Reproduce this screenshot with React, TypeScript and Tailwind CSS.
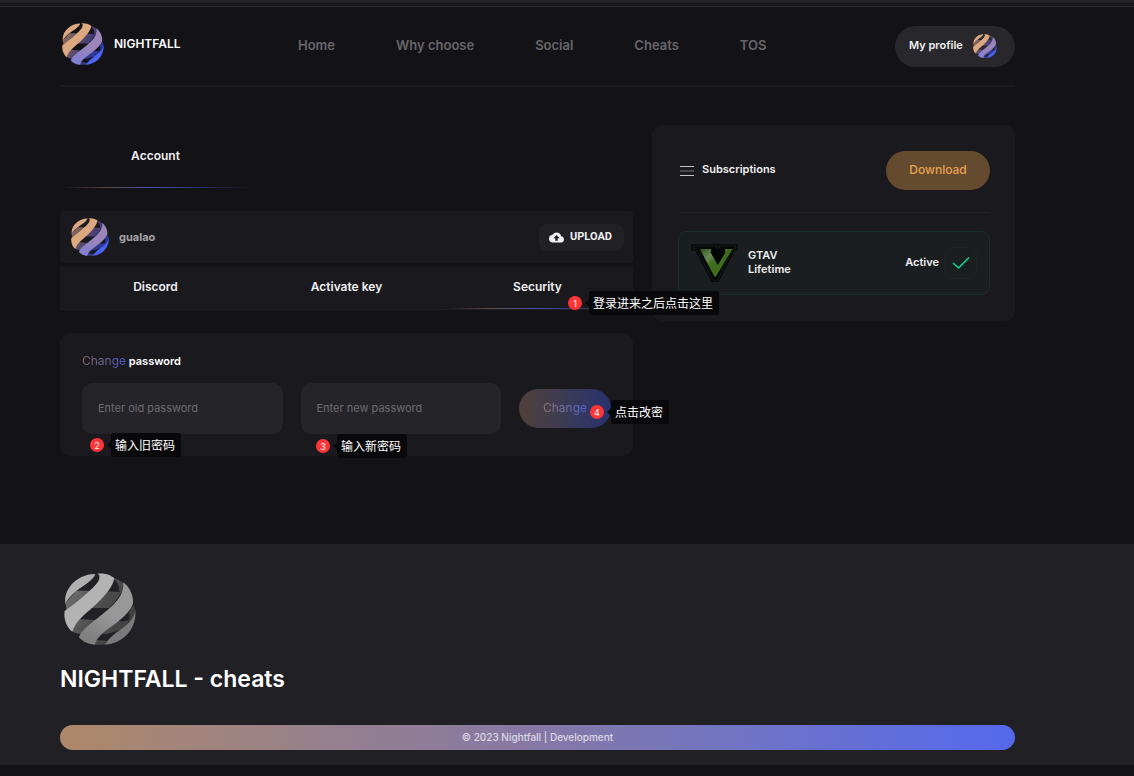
import { useId, type ReactNode } from 'react';
import { MdCloudUpload } from 'react-icons/md';

type Palette = { front: [string, string, string]; top: string; low: string; back: [string, string, string] };

const COLOR: Palette = {
  front: ['#dba87f', '#9b85bb', '#8580cf'],
  top: '#dba87f',
  low: '#4d63f2',
  back: ['#8a6a58', '#4e4270', '#1f35a8'],
};

const GRAY: Palette = {
  front: ['#b3b3b3', '#989898', '#808080'],
  top: '#b0b0b0',
  low: '#7a7a7a',
  back: ['#6e6e6e', '#4b4b4b', '#404040'],
};

function Globe({ palette, className }: { palette: Palette; className: string }) {
  const id = useId();
  const front = `${id}f`;
  const back = `${id}b`;
  return (
    <svg viewBox="12 14 216 216" className={className} aria-hidden="true">
      <defs>
        <linearGradient id={front} gradientUnits="userSpaceOnUse" x1="190" y1="60" x2="110" y2="215">
          <stop offset="0.5" stopColor={palette.front[1]} />
          <stop offset="1" stopColor={palette.front[2]} />
        </linearGradient>
        <linearGradient id={back} gradientUnits="userSpaceOnUse" x1="25" y1="80" x2="210" y2="180">
          <stop offset="0" stopColor={palette.back[0]} />
          <stop offset="0.5" stopColor={palette.back[1]} />
          <stop offset="1" stopColor={palette.back[2]} />
        </linearGradient>
      </defs>
      <g fill={`url(#${back})`}>
        <path d="M16 104L50 67H98L184 71C174 90 162 106 147 119H70L20 126Z" />
        <path d="M160 28C174 33 184 38 192 46L191 74L178 69C178 52 172 40 160 30Z" />
        <path d="M36 188C42 172 51 160 60 152L110 156L190 159L208 156L196 180L140 198L62 196C52 197 44 195 36 188Z" />
        <path d="M207 130L221 110C226 120 227 135 225 145L206 166C209 154 209 142 207 130Z" />
        <path d="M104 229L110 215L146 218L137 229Z" />
      </g>
      <path fill={palette.top} d="M16 106C10 58 56 16 106 17C99 37 74 49 50 67C34 80 22 92 16 106Z" />
      <path
        fill={palette.front[0]}
        d="M111 16C132 13 153 19 163 30C158 56 137 80 113 103C84 131 46 156 37 190C20 178 10 151 14 128C36 112 62 92 86 70C104 53 121 38 118 22C117 19 115 17 111 16Z"
      />
      <path
        fill={`url(#${front})`}
        d="M190 42C208 56 221 80 219 107C204 142 168 164 136 188C117 203 108 216 105 229C86 228 68 220 57 207C62 187 88 169 117 146C152 118 194 88 190 42Z"
      />
      <path fill={palette.low} d="M226 126C231 181 189 226 136 229C144 211 163 196 185 181C206 166 223 150 226 126Z" />
    </svg>
  );
}

function GameLogo() {
  return (
    <svg viewBox="152 386 142 116" className="h-[38px] w-[47px] shrink-0" aria-hidden="true">
      <defs>
        <linearGradient id="vfill" x1="0" y1="0" x2="1" y2="1">
          <stop offset="0" stopColor="#2d4d1d" />
          <stop offset="0.28" stopColor="#6b8a58" />
          <stop offset="0.45" stopColor="#3d6d1c" />
          <stop offset="1" stopColor="#3c6a1a" />
        </linearGradient>
      </defs>
      <path d="M153 387H293V406H284L236 501H214L164 406H153Z" fill="#050706" />
      <path d="M158 392H288V401H280L233 496H217L168 401H158Z" fill="none" stroke="#23292b" strokeWidth="2" />
      <path d="M178 401H218L216 412L233 448L250 412L246 401H278L227 486H223Z" fill="url(#vfill)" />
      <path d="M214 399H254L256 412L233 450L211 412Z" fill="#030403" />
      <path d="M229 393V401M237 393V401" stroke="#30363a" strokeWidth="2" />
    </svg>
  );
}

function Note({ step, className, children }: { step: number; className: string; children: ReactNode }) {
  return (
    <div className={`absolute z-10 flex items-center gap-[7px] whitespace-nowrap ${className}`}>
      <span className="flex size-3.5 items-center justify-center rounded-full bg-[#ff3436] text-[9px] leading-none text-white">
        {step}
      </span>
      <span className="relative h-6 rounded-[2px] bg-[#09090b] pr-1.5 pl-1 font-['Noto_Sans_CJK_SC',sans-serif] text-[12px] leading-6 text-white">
        <span className="absolute top-2 -left-1 border-y-4 border-r-4 border-y-transparent border-r-[#09090b]" />
        {children}
      </span>
    </div>
  );
}

const NAV = ['Home', 'Why choose', 'Social', 'Cheats', 'TOS'];

function Underline() {
  return (
    <span className="absolute inset-x-0 bottom-0 h-px bg-linear-to-r from-transparent via-[#4a4cae] to-transparent">
      <span className="block h-px w-1/2 bg-linear-to-r from-[#131217] via-[#5d4b48] to-[#4a4cae]" />
    </span>
  );
}

export default function App() {
  return (
    <div className="min-h-screen bg-[#131217] font-[Inter,sans-serif] text-[11px] text-[#f0f0f1]">
      <div className="h-[7px] border-b border-[#2c2c2d] bg-linear-to-b from-[#212327] from-50% to-[#171718] to-50%" />

      <header className="mr-[119px] ml-15 flex h-20 items-center border-b-2 border-[#1b1a20]">
        <a href="#home" className="flex w-[238px] items-center gap-2.5 pb-1 pl-0.5 text-[12px] font-semibold text-white">
          <Globe palette={COLOR} className="size-[42px]" />
          NIGHTFALL
        </a>
        <nav className="flex gap-[61px] text-[13px] font-semibold text-[#67666a]">
          {NAV.map((n) => (
            <a key={n} href={`#${n}`}>
              {n}
            </a>
          ))}
        </nav>
        <a
          href="#profile"
          className="ml-auto flex h-[41px] w-[120px] items-center justify-between rounded-full bg-[#28272b] pr-[18px] pl-3.5 font-semibold"
        >
          <span className="pb-0.5">My profile</span>
          <Globe palette={COLOR} className="size-6" />
        </a>
      </header>

      <main className="mr-[119px] ml-15 grid grid-cols-[minmax(0,573fr)_minmax(0,363fr)] items-start gap-[19px] pt-[38px] pb-[88px]">
        <div>
          <button className="relative h-[63px] w-1/3 pb-0.5 text-[12px] font-semibold">
            Account
            <Underline />
          </button>

          <section className="mt-[23px] flex h-[52px] items-center rounded bg-[#1a191e] pr-[9px] pl-[11px]">
            <Globe palette={COLOR} className="size-[38px]" />
            <span className="ml-2.5 font-bold text-[#a5a4a8]">gualao</span>
            <button className="ml-auto flex h-[27px] items-center gap-1.5 rounded-lg bg-[#212025] pr-3 pl-2.5 font-[Roboto,sans-serif] font-bold">
              <MdCloudUpload className="size-[15px]" />
              UPLOAD
            </button>
          </section>

          <div className="relative mt-[3px] grid h-11 grid-cols-3 border-b border-[#1f1e23] bg-[#1a191e] text-[12px]">
            <button className="pb-0.5 font-semibold">Discord</button>
            <button className="pb-0.5 font-semibold">Activate key</button>
            <button className="relative pb-0.5 font-semibold">
              Security
              <Underline />
            </button>
            <Note step={1} className="top-[25px] left-[508px]">
              登录进来之后点击这里
            </Note>
          </div>

          <section className="relative mt-[23px] rounded-[10px] bg-[#1a191e] px-[22px] pt-5 pb-[22px]">
            <h2 className="text-[11px] leading-4 font-semibold text-white">
              <span className="bg-linear-to-r from-[#82685a] to-[#5059c8] bg-clip-text text-[12px] font-normal text-transparent">
                Change
              </span>{' '}
              password
            </h2>
            <form className="mt-3.5 flex items-center gap-[18px]" onSubmit={(e) => e.preventDefault()}>
              <input
                type="password"
                aria-label="Enter old password"
                placeholder="Enter old password"
                className="h-[51px] min-w-0 flex-1 rounded-[10px] bg-[#252428] px-4 pb-0.5 outline-none placeholder:text-[#6d6c70]"
              />
              <input
                type="password"
                aria-label="Enter new password"
                placeholder="Enter new password"
                className="h-[51px] min-w-0 flex-1 rounded-[10px] bg-[#252428] px-4 pb-0.5 outline-none placeholder:text-[#6d6c70]"
              />
              <button className="h-[39px] w-[92px] rounded-full bg-linear-to-r from-[#503f38] to-[#28316f] pb-0.5 text-[12px]">
                <span className="bg-linear-to-r from-[#8f7468] to-[#5662d8] bg-clip-text text-transparent">Change</span>
              </button>
            </form>
            <Note step={2} className="top-[100px] left-[30px]">
              输入旧密码
            </Note>
            <Note step={3} className="top-[101px] left-[256px]">
              输入新密码
            </Note>
            <Note step={4} className="top-[67px] left-[530px]">
              点击改密
            </Note>
          </section>
        </div>

        <aside className="rounded-[10px] bg-[#1a191e] py-[26px] pr-[25px] pl-[26px]">
          <div className="flex items-center border-b border-[#212025] pb-[22px]">
            <svg viewBox="0 0 14 12" className="ml-0.5 h-3 w-3.5" stroke="#c4c4c6" aria-hidden="true">
              <path d="M0 1.5H14M0 10.5H14" />
              <path d="M0 6H14" stroke="#77767a" />
            </svg>
            <h2 className="ml-2 pb-0.5 text-[11px] font-semibold">Subscriptions</h2>
            <button className="ml-auto h-[39px] w-[104px] rounded-full bg-[#644a2f] pb-0.5 text-[12px] font-medium text-[#eba34f]">
              Download
            </button>
          </div>
          <div className="mt-[18px] flex h-16 items-center rounded-lg border border-[#18302b] bg-[#1a1e20] px-3">
            <GameLogo />
            <p className="ml-2.5 pb-0.5 leading-[14px] font-semibold">
              GTAV
              <br />
              Lifetime
            </p>
            <span className="ml-auto pb-0.5 font-semibold">Active</span>
            <span className="ml-1.5 flex size-8 items-center justify-center rounded-lg border border-[#20241f]">
              <svg
                viewBox="0 0 18 14"
                className="h-3.5 w-[18px]"
                fill="none"
                stroke="#0bd989"
                strokeWidth="1.6"
                aria-hidden="true"
              >
                <path d="M1 7L6.5 12L17 1.5" />
              </svg>
            </span>
          </div>
        </aside>
      </main>

      <footer className="bg-[#212025] pt-[29px] pr-[119px] pb-[15px] pl-15">
        <Globe palette={GRAY} className="ml-1 size-[72px]" />
        <h1 className="mt-[18px] text-[23px] leading-8 font-semibold text-white">NIGHTFALL - cheats</h1>
        <p className="mt-[30px] h-[25px] rounded-full bg-linear-to-r from-[#ae8869] via-[#8578a5] to-[#5568ed] text-center text-[10px] leading-6 font-medium text-[#dcd8e6]">
          © 2023 Nightfall | Development
        </p>
      </footer>
    </div>
  );
}
